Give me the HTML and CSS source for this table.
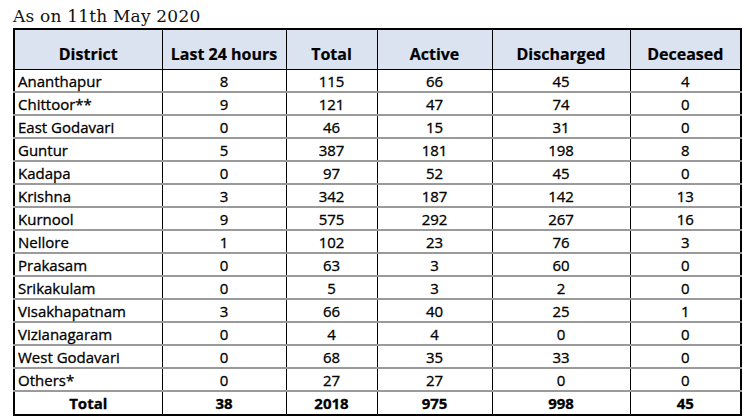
FILE: index.html
```html
<!DOCTYPE html>
<html>
<head>
<meta charset="utf-8">
<link rel="stylesheet" href="styles.css">
</head>
<body>
<div class="page">
  <div class="title">As on 11th May 2020</div>
  <table class="stats">
    <colgroup>
      <col class="c1"><col class="c2"><col class="c3"><col class="c4"><col class="c5"><col class="c6">
    </colgroup>
    <thead>
      <tr><th>District</th><th>Last 24 hours</th><th>Total</th><th>Active</th><th>Discharged</th><th>Deceased</th></tr>
    </thead>
    <tbody>
      <tr><td class="name">Ananthapur</td><td>8</td><td>115</td><td>66</td><td>45</td><td>4</td></tr>
      <tr><td class="name">Chittoor**</td><td>9</td><td>121</td><td>47</td><td>74</td><td>0</td></tr>
      <tr><td class="name">East Godavari</td><td>0</td><td>46</td><td>15</td><td>31</td><td>0</td></tr>
      <tr><td class="name">Guntur</td><td>5</td><td>387</td><td>181</td><td>198</td><td>8</td></tr>
      <tr><td class="name">Kadapa</td><td>0</td><td>97</td><td>52</td><td>45</td><td>0</td></tr>
      <tr><td class="name">Krishna</td><td>3</td><td>342</td><td>187</td><td>142</td><td>13</td></tr>
      <tr><td class="name">Kurnool</td><td>9</td><td>575</td><td>292</td><td>267</td><td>16</td></tr>
      <tr><td class="name">Nellore</td><td>1</td><td>102</td><td>23</td><td>76</td><td>3</td></tr>
      <tr><td class="name">Prakasam</td><td>0</td><td>63</td><td>3</td><td>60</td><td>0</td></tr>
      <tr><td class="name">Srikakulam</td><td>0</td><td>5</td><td>3</td><td>2</td><td>0</td></tr>
      <tr><td class="name">Visakhapatnam</td><td>3</td><td>66</td><td>40</td><td>25</td><td>1</td></tr>
      <tr><td class="name">Vizianagaram</td><td>0</td><td>4</td><td>4</td><td>0</td><td>0</td></tr>
      <tr><td class="name">West Godavari</td><td>0</td><td>68</td><td>35</td><td>33</td><td>0</td></tr>
      <tr><td class="name">Others*</td><td>0</td><td>27</td><td>27</td><td>0</td><td>0</td></tr>
    </tbody>
    <tfoot>
      <tr><td>Total</td><td>38</td><td>2018</td><td>975</td><td>998</td><td>45</td></tr>
    </tfoot>
  </table>
</div>
</body>
</html>
```
FILE: styles.css
```css
html, body {
  margin: 0;
  padding: 0;
  background: #ffffff;
}
.page {
  padding: 5px 0 0 13px;
}
.title {
  font-family: "DejaVu Serif", serif;
  font-size: 17px;
  letter-spacing: 0.2px;
  line-height: 22px;
  height: 23px;
  color: #111;
}
.stats {
  border-collapse: collapse;
  width: 727px;
  table-layout: fixed;
  border: 2px solid #000;
  font-family: "Open Sans", sans-serif;
  font-size: 15px;
  color: #000;
  -webkit-text-stroke: 0.3px #000;
}
.c1 { width: 148px; }
.c2 { width: 124px; }
.c3 { width: 91px; }
.c4 { width: 115px; }
.c5 { width: 138px; }
.c6 { width: 111px; }
.stats th {
  background: #dbe3f1;
  font-size: 16px;
  font-weight: 700;
  height: 35px;
  vertical-align: bottom;
  padding: 0 0 4px 0;
  line-height: 22px;
  border-left: 1px solid #000;
  border-bottom: 1px solid #000;
  text-align: center;
  -webkit-text-stroke: 0.2px #000;
}
.stats td {
  height: 21px;
  padding: 0;
  text-align: center;
  border-left: 1px solid #000;
  border-top: 2px solid #9a9a9a;
  line-height: 20px;
}
.stats thead + tbody tr:first-child td {
  border-top: 1px solid #000;
}
.stats td.name {
  text-align: left;
  padding-left: 3px;
}
.stats tfoot td {
  font-weight: 700;
  height: 22px;
}
```
